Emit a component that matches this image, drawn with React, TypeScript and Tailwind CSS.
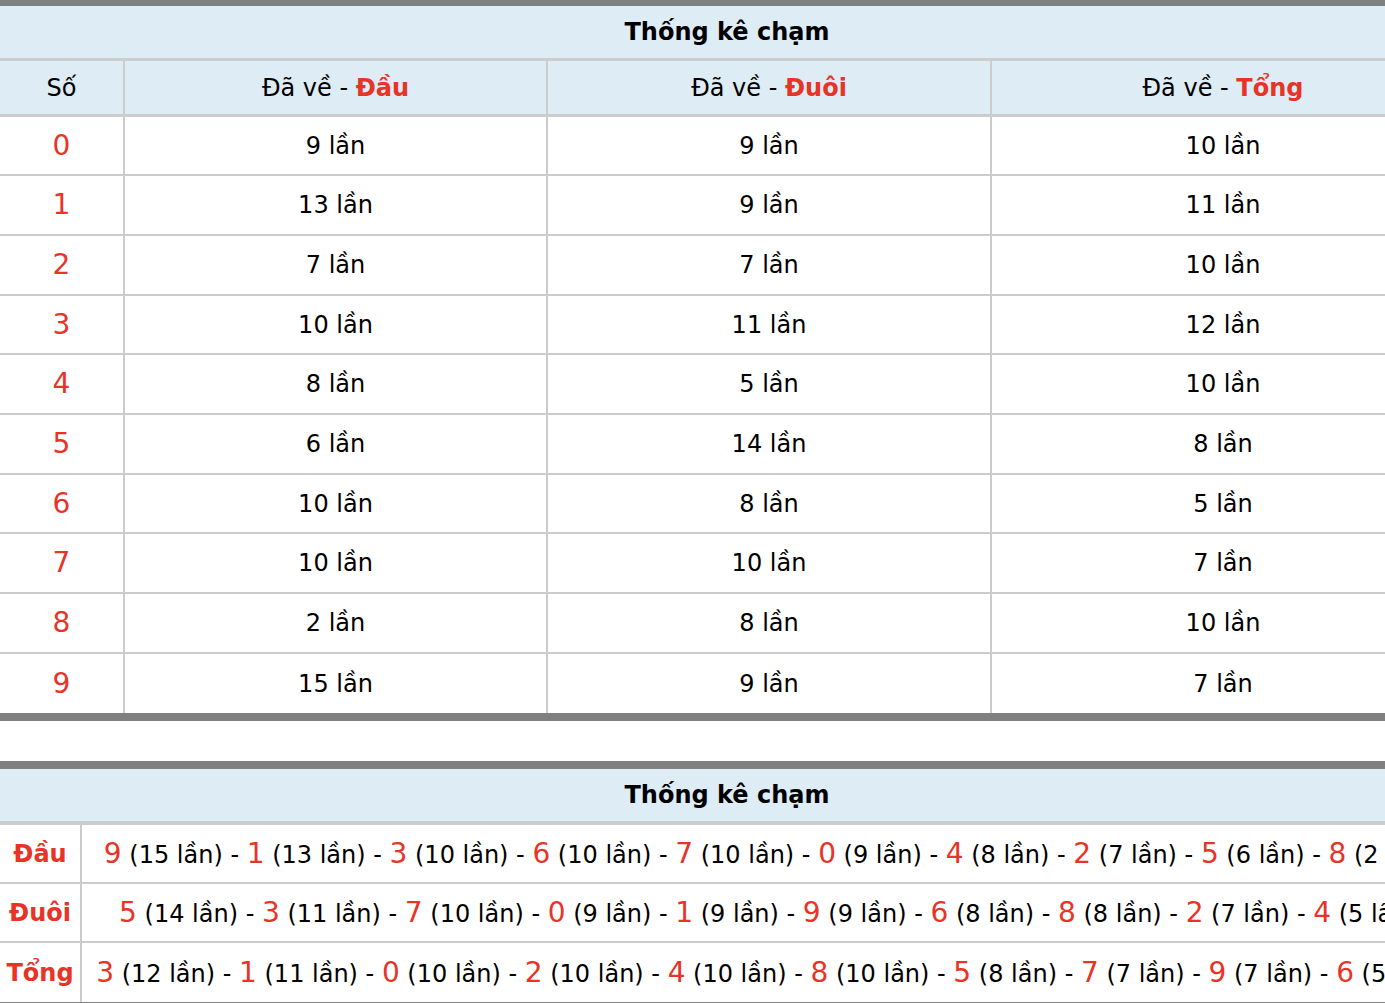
const rows = [
  { so: 0, dau: 9, duoi: 9, tong: 10 },
  { so: 1, dau: 13, duoi: 9, tong: 11 },
  { so: 2, dau: 7, duoi: 7, tong: 10 },
  { so: 3, dau: 10, duoi: 11, tong: 12 },
  { so: 4, dau: 8, duoi: 5, tong: 10 },
  { so: 5, dau: 6, duoi: 14, tong: 8 },
  { so: 6, dau: 10, duoi: 8, tong: 5 },
  { so: 7, dau: 10, duoi: 10, tong: 7 },
  { so: 8, dau: 2, duoi: 8, tong: 10 },
  { so: 9, dau: 15, duoi: 9, tong: 7 },
];

const summary: { label: string; items: [number, number][] }[] = [
  {
    label: 'Đầu',
    items: [[9, 15], [1, 13], [3, 10], [6, 10], [7, 10], [0, 9], [4, 8], [2, 7], [5, 6], [8, 2]],
  },
  {
    label: 'Đuôi',
    items: [[5, 14], [3, 11], [7, 10], [0, 9], [1, 9], [9, 9], [6, 8], [8, 8], [2, 7], [4, 5]],
  },
  {
    label: 'Tổng',
    items: [[3, 12], [1, 11], [0, 10], [2, 10], [4, 10], [8, 10], [5, 8], [7, 7], [9, 7], [6, 5]],
  },
];

const cols = 'grid grid-cols-[123px_423px_444px_464px]';

function HeadCell({ kind }: { kind: string }) {
  return (
    <div className="flex items-center justify-center border-l-2 border-[#cccccc]">
      <span>
        Đã về - <span className="font-bold text-[#e73427]">{kind}</span>
      </span>
    </div>
  );
}

export default function App() {
  return (
    <div className="h-[1003px] w-[1385px] overflow-hidden bg-white font-['DejaVu_Sans',sans-serif] text-[24px] text-black">
      <div className="-mt-[2px] w-[1454px]">
        <section className="border-y-8 border-[#808080]">
          <div className="flex h-[52px] items-center justify-center bg-[#ddecf5] font-bold">Thống kê chạm</div>
          <div className={`${cols} h-[59px] border-y-[3px] border-[#cccccc] bg-[#ddecf5]`}>
            <div className="flex items-center justify-center">Số</div>
            <HeadCell kind="Đầu" />
            <HeadCell kind="Đuôi" />
            <HeadCell kind="Tổng" />
          </div>
          {rows.map((r, i) => (
            <div
              key={r.so}
              className={`${cols} ${i % 3 === 0 ? 'h-[59px]' : 'h-[60px]'} ${
                i < rows.length - 1 ? 'border-b-2 border-[#cccccc]' : ''
              }`}
            >
              <div className="flex items-center justify-center text-[28px] text-[#e73427]">{r.so}</div>
              <div className="flex items-center justify-center border-l-2 border-[#cccccc]">{r.dau} lần</div>
              <div className="flex items-center justify-center border-l-2 border-[#cccccc]">{r.duoi} lần</div>
              <div className="flex items-center justify-center border-l-2 border-[#cccccc]">{r.tong} lần</div>
            </div>
          ))}
        </section>

        <section className="mt-[40px] border-t-8 border-b-2 border-[#808080]">
          <div className="flex h-[56px] items-center justify-center border-b-4 border-[#cccccc] bg-[#ddecf5] font-bold">
            Thống kê chạm
          </div>
          {summary.map((s, i) => (
            <div
              key={s.label}
              className={`grid h-[59px] grid-cols-[80px_1fr] ${i < summary.length - 1 ? 'border-b-2 border-[#cccccc]' : ''}`}
            >
              <div className="flex items-center justify-center font-bold text-[#e73427]">{s.label}</div>
              <div className="flex items-center justify-center whitespace-nowrap border-l-2 border-[#cccccc]">
                <span>
                  {s.items.map(([n, c], j) => (
                    <span key={n}>
                      {j > 0 ? ' - ' : ''}
                      <span className="text-[28px] text-[#e73427]">{n}</span>
                      {` (${c} lần)`}
                    </span>
                  ))}
                </span>
              </div>
            </div>
          ))}
        </section>
      </div>
    </div>
  );
}
